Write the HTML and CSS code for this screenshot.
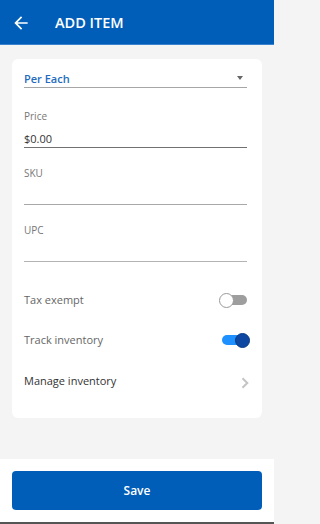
FILE: index.html
```html
<!DOCTYPE html>
<html lang="en">
<head>
<meta charset="utf-8">
<title>Add Item</title>
<link rel="stylesheet" href="styles.css">
</head>
<body>
<div class="app">
  <header class="topbar">
    <svg class="back" viewBox="0 0 24 24" aria-hidden="true"><path d="M20 11H7.83l5.59-5.59L12 4l-8 8 8 8 1.41-1.41L7.83 13H20v-2z" fill="#fff"/></svg>
    <h1 class="title">ADD ITEM</h1>
  </header>
  <main class="content">
    <section class="card">
      <div class="select"><span class="select-value">Per Each</span><span class="caret"></span></div>
      <div class="field field-first">
        <div class="label">Price</div>
        <div class="input input-filled">$0.00</div>
      </div>
      <div class="field">
        <div class="label">SKU</div>
        <div class="input"></div>
      </div>
      <div class="field">
        <div class="label">UPC</div>
        <div class="input input-light"></div>
      </div>
      <div class="rows">
        <div class="row">
          <span class="row-label">Tax exempt</span>
          <span class="toggle"><span class="track"></span><span class="knob"></span></span>
        </div>
        <div class="row">
          <span class="row-label">Track inventory</span>
          <span class="toggle on"><span class="track"></span><span class="knob"></span></span>
        </div>
        <div class="row row-last">
          <span class="row-label row-dark">Manage inventory</span>
          <svg class="chevron" viewBox="0 0 8 12" aria-hidden="true"><polyline points="1.5,1.2 6.3,6 1.5,10.8" fill="none" stroke="#c4c4c4" stroke-width="2"/></svg>
        </div>
      </div>
    </section>
  </main>
  <footer class="footer">
    <button class="save">Save</button>
  </footer>
</div>
</body>
</html>
```

FILE: styles.css
```css
* { box-sizing: border-box; }
html, body { margin: 0; padding: 0; }
body {
  font-family: "Open Sans", "Noto Sans", "Liberation Sans", sans-serif;
  background: #f4f4f4;
}
.app {
  width: 274px;
  height: 524px;
  overflow: hidden;
  display: flex;
  flex-direction: column;
}
.topbar {
  height: 45px;
  flex: none;
  background: #005eb8;
  border-bottom: 1px solid #3a84cf;
  display: flex;
  align-items: center;
  padding: 2px 0 0 11px;
}
.back {
  width: 20px;
  height: 20px;
  flex: none;
}
.title {
  margin: 0 0 0 24px;
  color: #fff;
  font-size: 14.5px;
  font-weight: 600;
  line-height: 20px;
  letter-spacing: 0;
}
.content {
  flex: 1;
  background: #f4f4f4;
  padding: 14px 12px 0;
}
.card {
  background: #fff;
  border-radius: 6px;
  padding: 12px 12px 17px;
}
.select {
  display: flex;
  align-items: center;
  justify-content: space-between;
  margin-right: 3px;
  height: 17px;
  border-bottom: 1px solid #a6a6a6;
}
.select-value {
  color: #1f6cc0;
  font-size: 11px;
  font-weight: 600;
  line-height: 16px;
}
.caret {
  width: 0;
  height: 0;
  border-left: 3.5px solid transparent;
  border-right: 3.5px solid transparent;
  border-top: 4px solid #666;
  margin: 0 4px 2px 0;
}
.field {
  margin: 18px 3px 0 0;
}
.field-first { margin-top: 21px; }
.label {
  color: #777;
  font-size: 10px;
  line-height: 14px;
}
.input {
  margin-top: 8px;
  height: 17px;
  line-height: 16px;
  font-size: 11px;
  color: #333;
  border-bottom: 1px solid #a8a8a8;
}
.input-filled { border-bottom-color: #707070; }
.input-light { border-bottom-color: #b4b4b4; }
.rows {
  margin-top: 18px;
}
.row {
  height: 40px;
  display: flex;
  align-items: center;
  justify-content: space-between;
}
.row-last { height: 41px; padding-top: 1px; }
.row-label {
  font-size: 11px;
  color: #666;
  line-height: 16px;
}
.row-dark { color: #333; }
.toggle {
  position: relative;
  width: 31px;
  height: 15px;
  flex: none;
}
.track {
  position: absolute;
  left: 3px;
  top: 2.5px;
  width: 25px;
  height: 10px;
  border-radius: 5px;
  background: #9e9e9e;
}
.knob {
  position: absolute;
  left: 0;
  top: 0;
  width: 15px;
  height: 15px;
  border-radius: 50%;
  background: #fff;
  border: 1px solid #9a9a9a;
}
.toggle.on .track { background: #1e90ff; }
.toggle.on .knob {
  left: 16px;
  background: #0d47a1;
  border-color: #0a3a86;
}
.chevron {
  width: 8px;
  height: 12px;
  margin: 4px 1px 0 0;
}
.footer {
  flex: none;
  height: 65px;
  background: #fff;
  padding: 12px 12px 0;
  border-bottom: 2px solid #555;
}
.save {
  display: block;
  width: 100%;
  height: 39px;
  border: 0;
  border-radius: 4px;
  background: #005eb8;
  color: #fff;
  font-family: inherit;
  font-size: 12px;
  font-weight: 600;
}
```
